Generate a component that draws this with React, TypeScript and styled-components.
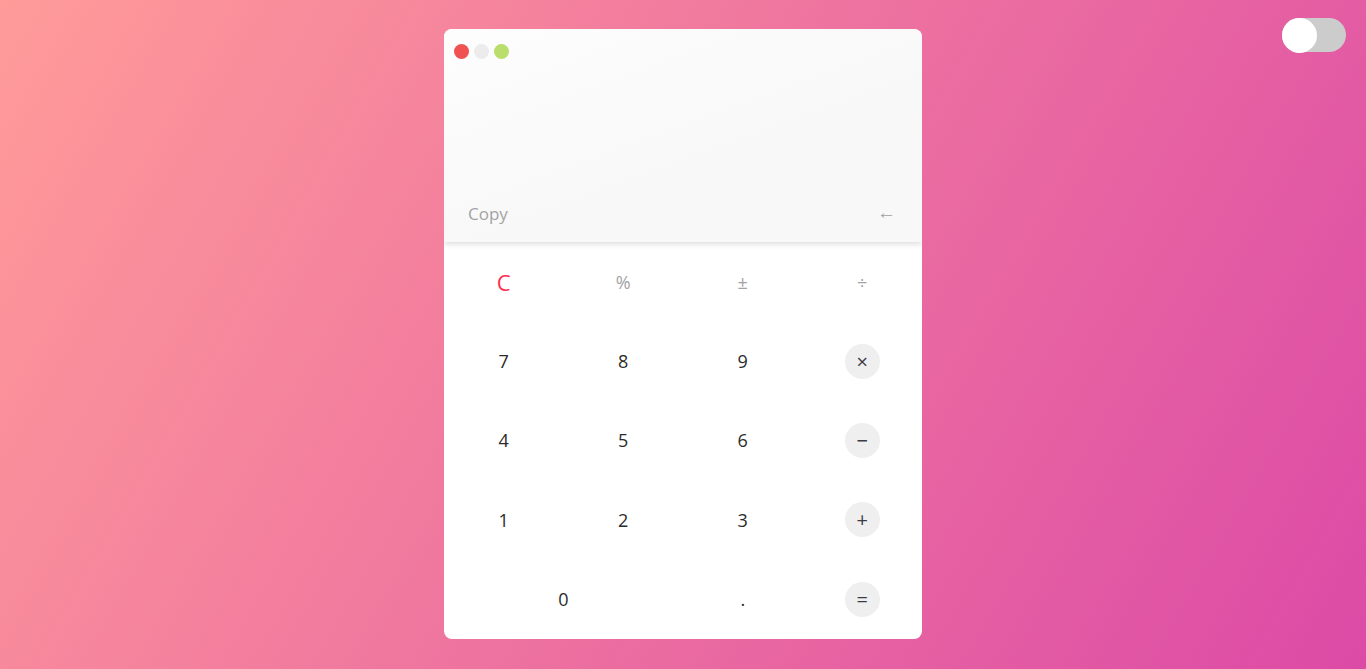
import React from "react";
import styled, { createGlobalStyle } from "styled-components";

const Global = createGlobalStyle`
  html, body { margin: 0; padding: 0; height: 100%; }
  body {
    font-family: "Open Sans", "Noto Sans", sans-serif;
    background: linear-gradient(120deg, #ff9b99 0%, #dc4aa6 100%);
    min-height: 669px;
    overflow: hidden;
  }
`;

const Page = styled.div`
  position: relative;
  height: 669px;
  display: flex;
  justify-content: center;
  padding-top: 29px;
  box-sizing: border-box;
`;

const Toggle = styled.div`
  position: absolute;
  top: 18px;
  right: 20px;
  width: 64px;
  height: 34px;
  border-radius: 17px;
  background: #cccccc;
`;

const Knob = styled.div`
  width: 35px;
  height: 35px;
  border-radius: 50%;
  background: #ffffff;
  margin-top: -0.5px;
`;

const Card = styled.div`
  width: 478px;
  height: 610px;
  background: #ffffff;
  border-radius: 8px;
  overflow: hidden;
  display: flex;
  flex-direction: column;
`;

const Display = styled.div`
  height: 213px;
  background: linear-gradient(160deg, #fdfdfd 0%, #f8f8f9 60%);
  box-shadow: 0 2px 6px rgba(0, 0, 0, 0.14);
  position: relative;
  z-index: 1;
  display: flex;
  flex-direction: column;
  justify-content: space-between;
  box-sizing: border-box;
  padding: 15px 0 0 10px;
`;

const Dots = styled.div`
  display: flex;
  gap: 5px;
`;

const Dot = styled.span<{ $c: string }>`
  width: 15px;
  height: 15px;
  border-radius: 50%;
  background: ${(p) => p.$c};
`;

const Footer = styled.div`
  display: flex;
  justify-content: space-between;
  align-items: center;
  padding: 0 26px 17px 14px;
  color: #a3a3a3;
  font-size: 17px;
`;

const Arrow = styled.span`
  font-size: 19px;
  font-weight: 600;
  line-height: 1;
  color: #a0a0a0;
  margin-top: -2px;
`;

const Keys = styled.div`
  flex: 1;
  display: grid;
  grid-template-columns: repeat(4, 1fr);
  grid-template-rows: repeat(5, 1fr);
`;

const Key = styled.div<{ $span?: number; $tone?: "red" | "gray" | "dark" }>`
  grid-column: span ${(p) => p.$span ?? 1};
  display: flex;
  align-items: center;
  justify-content: center;
  font-size: 18px;
  color: ${(p) =>
    p.$tone === "red" ? "#ff2d4f" : p.$tone === "gray" ? "#a3a3a3" : "#2b2b2b"};
  ${(p) => (p.$tone === "red" ? "font-size: 22px;" : "")}
`;

const Op = styled.span`
  width: 35px;
  height: 35px;
  border-radius: 50%;
  background: #efefef;
  display: flex;
  align-items: center;
  justify-content: center;
  font-size: 20px;
  font-weight: 400;
  color: #3b3b45;
`;

export default function App() {
  return (
    <>
      <Global />
      <Page>
        <Card>
          <Display>
            <Dots>
              <Dot $c="#f05252" />
              <Dot $c="#ececec" />
              <Dot $c="#b9de6b" />
            </Dots>
            <Footer>
              <span>Copy</span>
              <Arrow>←</Arrow>
            </Footer>
          </Display>
          <Keys>
            <Key $tone="red">C</Key>
            <Key $tone="gray">%</Key>
            <Key $tone="gray">±</Key>
            <Key $tone="gray">÷</Key>
            <Key>7</Key>
            <Key>8</Key>
            <Key>9</Key>
            <Key><Op>×</Op></Key>
            <Key>4</Key>
            <Key>5</Key>
            <Key>6</Key>
            <Key><Op>−</Op></Key>
            <Key>1</Key>
            <Key>2</Key>
            <Key>3</Key>
            <Key><Op>+</Op></Key>
            <Key $span={2}>0</Key>
            <Key>.</Key>
            <Key><Op>=</Op></Key>
          </Keys>
        </Card>
        <Toggle>
          <Knob />
        </Toggle>
      </Page>
    </>
  );
}
